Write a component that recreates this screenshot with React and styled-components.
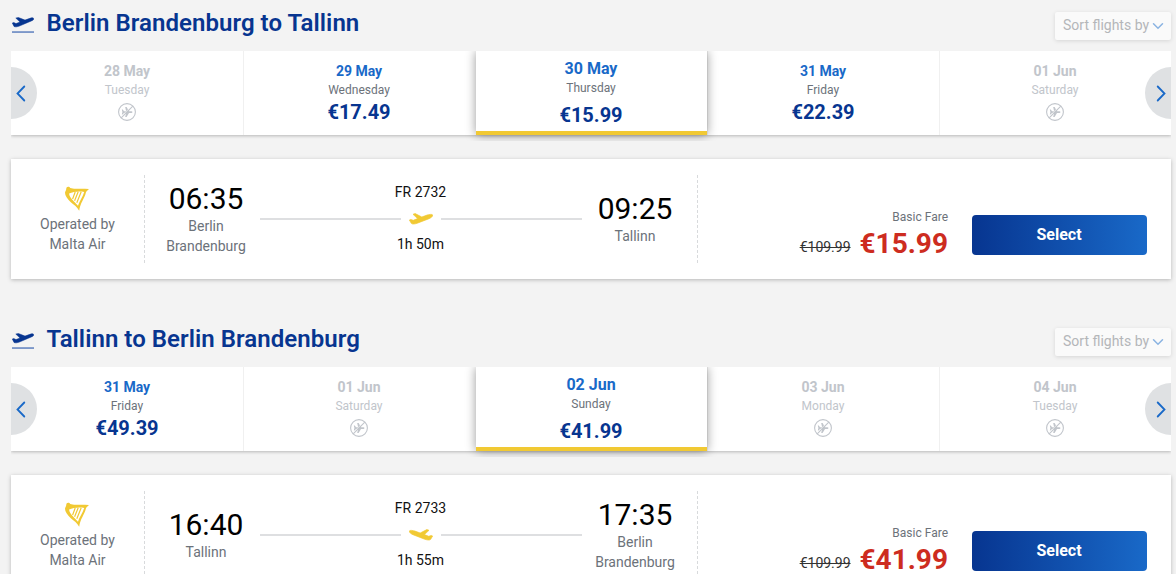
import React from 'react'
import styled, { createGlobalStyle, css } from 'styled-components'

const trips = [
    {
        title: 'Berlin Brandenburg to Tallinn',
        days: [
            { date: '28 May', day: 'Tuesday' },
            { date: '29 May', day: 'Wednesday', price: '€17.49' },
            { date: '30 May', day: 'Thursday', price: '€15.99', selected: true },
            { date: '31 May', day: 'Friday', price: '€22.39' },
            { date: '01 Jun', day: 'Saturday' },
        ],
        flight: {
            number: 'FR 2732',
            duration: '1h 50m',
            from: { time: '06:35', city: 'Berlin Brandenburg' },
            to: { time: '09:25', city: 'Tallinn' },
            oldPrice: '€109.99',
            price: '€15.99',
        },
    },
    {
        title: 'Tallinn to Berlin Brandenburg',
        days: [
            { date: '31 May', day: 'Friday', price: '€49.39' },
            { date: '01 Jun', day: 'Saturday' },
            { date: '02 Jun', day: 'Sunday', price: '€41.99', selected: true },
            { date: '03 Jun', day: 'Monday' },
            { date: '04 Jun', day: 'Tuesday' },
        ],
        flight: {
            number: 'FR 2733',
            duration: '1h 55m',
            from: { time: '16:40', city: 'Tallinn' },
            to: { time: '17:35', city: 'Berlin Brandenburg' },
            oldPrice: '€109.99',
            price: '€41.99',
            inbound: true,
        },
    },
]

const TakeoffIcon = () => (
    <svg width="22" height="17" viewBox="0 0 22 17">
        <path fill="#073590" stroke="#073590" strokeWidth=".5" strokeLinejoin="round" d="M.3 6L1.8 5.5L4 6.6L8 5L3.8 1.1L6.4.5L13 3.1L18.6 1.1C20.3.5 21.4.7 21.7 1.4C22 2.4 21 3.3 19.4 3.9L8 8.8C5.5 9.8 3 10.3 2 9.4Z" />
        <path fill="#6f8dc4" d="M0 14.2h22v1.7H0z" />
    </svg>
)

const PlaneIcon = ({ inbound }) => (
    <svg width="24" height="12" viewBox="0 0 24 12">
        <path
            transform={inbound ? 'translate(24 0) scale(-1 1)' : undefined}
            fill="#f1c933"
            stroke="#f1c933"
            strokeWidth=".7"
            strokeLinejoin="round"
            d="M23.6 1.9C22.8 1 20 1.4 18 2.1L12.8 4L6.2.6L4 1.3L8.6 5.6L4.3 7.3L1.8 6.5L.4 7L2.3 10.3C3.1 11.5 6 11 8.3 10.2L20 5.7C22.2 4.8 24.2 3.1 23.6 1.9Z"
        />
    </svg>
)

const HarpIcon = () => (
    <svg width="24" height="25" viewBox="0 0 24 25">
        <path fill="#f1c933" fillRule="evenodd" d="M1.4 1.7C2.3.4 4.6.5 5.2 2C9.4 3.6 14 2 23.8 3C22.9 4.4 21.8 4.7 20.9 6.4C19.6 12.4 15.2 16.8 14.2 24.7C12.1 20.9 9.2 19.2 5.8 16.3C2.3 13.2 0 9.4 0 6.8C.1 5.2 1.4 4.3 1.4 1.7ZM4.1 7.6C4.4 12 9.6 15.9 13 19.8C14 15.6 17.8 11.1 19.2 5.9C13.6 4.8 8 5.9 4.1 7.6Z" />
        <path fill="none" stroke="#f1c933" strokeWidth="1.2" d="M10.2 6L7.6 13M13.2 5.8L9.6 14.8M16.2 5.8L11.8 16.8" />
    </svg>
)

const NoFlightIcon = () => (
    <svg width="18" height="18" viewBox="0 0 18 18">
        <circle cx="9" cy="9" r="8.4" fill="none" stroke="#c1c5cb" strokeWidth="1.1" />
        <path fill="#c1c5cb" d="M3.8 6.6H4.8L6 8.2H8.1L7.2 4H8.6L11 8.2H13.4C14.8 8.4 14.8 9.7 13.4 9.9H11L8.6 14H7.2L8.1 9.9H6L4.8 11.5H3.8L4.4 9Z" />
        <path stroke="#fff" strokeWidth=".8" d="M3.9 12.9L12.9 3.9" />
        <path stroke="#c1c5cb" strokeWidth="1.1" d="M3.2 14.8L14.8 3.2" />
    </svg>
)

const Chevron = ({ d, width, height, color, stroke }) => (
    <svg width={width} height={height} viewBox={`0 0 ${width} ${height}`}>
        <path d={d} fill="none" stroke={color} strokeWidth={stroke} strokeLinecap="round" />
    </svg>
)

const DayTab = ({ item }) => (
    <Day $selected={item.selected} $disabled={!item.price}>
        <DayDate>{item.date}</DayDate>
        <DayName>{item.day}</DayName>
        {item.price ? <DayPrice>{item.price}</DayPrice> : <NoFlightIcon />}
    </Day>
)

const FlightCard = ({ flight }) => (
    <Card>
        <Operator>
            <HarpIcon />
            <span>Operated by<br />Malta Air</span>
        </Operator>
        <Schedule>
            <Stop>
                <Time>{flight.from.time}</Time>
                <City>{flight.from.city}</City>
            </Stop>
            <Route>
                <span>{flight.number}</span>
                <RouteLine>
                    <PlaneIcon inbound={flight.inbound} />
                </RouteLine>
                <span>{flight.duration}</span>
            </Route>
            <Stop>
                <Time>{flight.to.time}</Time>
                <City>{flight.to.city}</City>
            </Stop>
        </Schedule>
        <Fare>
            <FareName>Basic Fare</FareName>
            <Prices>
                <OldPrice>{flight.oldPrice}</OldPrice>
                <Price>{flight.price}</Price>
            </Prices>
        </Fare>
        <SelectButton>Select</SelectButton>
    </Card>
)

const App = () => (
    <>
        <GlobalStyle />
        <Page>
            {trips.map((trip) => (
                <Trip key={trip.title}>
                    <TripHeader>
                        <TakeoffIcon />
                        <Title>{trip.title}</Title>
                        <SortButton>
                            Sort flights by
                            <Chevron width={12} height={8} d="M1.5 1.7L6 6.2L10.5 1.7" color="#8ab3e2" stroke={1.5} />
                        </SortButton>
                    </TripHeader>
                    <Carousel>
                        {trip.days.map((item) => <DayTab key={item.date} item={item} />)}
                        <Arrow $side="left">
                            <Chevron width={10} height={17} d="M8.3 1.5L1.5 8.5L8.3 15.5" color="#1969c8" stroke={1.8} />
                        </Arrow>
                        <Arrow $side="right">
                            <Chevron width={10} height={17} d="M1.7 1.5L8.5 8.5L1.7 15.5" color="#1969c8" stroke={1.8} />
                        </Arrow>
                    </Carousel>
                    <FlightCard flight={trip.flight} />
                </Trip>
            ))}
        </Page>
    </>
)

export default App

const GlobalStyle = createGlobalStyle`
    * {
        box-sizing: border-box;
    }

    body {
        margin: 0;
        background: #f3f3f3;
        font-family: Roboto, "Liberation Sans", sans-serif;
        overflow: hidden;
    }

    svg {
        display: block;
        flex-shrink: 0;
    }
`

const Page = styled.main`
    width: 1176px;
    height: 574px;
    overflow: hidden;
    padding: 0 5px 0 11px;
`

const Trip = styled.section`
    height: 316px;
`

const TripHeader = styled.header`
    display: flex;
    align-items: center;
    height: 51px;
    padding-left: 1px;
`

const Title = styled.h2`
    flex: 1;
    margin: 0 0 5px 12.5px;
    font-size: 24px;
    line-height: 32px;
    font-weight: 600;
    letter-spacing: 0.05px;
    color: #073590;
`

const SortButton = styled.button`
    display: flex;
    align-items: center;
    justify-content: space-between;
    width: 116px;
    height: 28px;
    padding: 0 7px 2px 8px;
    border: 0;
    border-radius: 2px;
    background: #fafafa;
    box-shadow: 0 1px 4px rgba(0, 0, 0, 0.12);
    font: 400 14px/20px Roboto, sans-serif;
    color: #b4b6b9;
    white-space: nowrap;

    svg {
        margin-top: 2px;
    }
`

const Carousel = styled.div`
    position: relative;
    display: flex;
    height: 84px;
    background: #fff;
    box-shadow: 0 1px 3px rgba(0, 0, 0, 0.25);
    clip-path: inset(0 0 -6px 0);
`

const DayDate = styled.div`
    font-size: 14px;
    line-height: 20px;
    font-weight: 700;
    color: #1969c8;
`

const DayName = styled.div`
    margin-top: 1px;
    font-size: 12px;
    line-height: 16px;
    color: #6c727a;
`

const DayPrice = styled.div`
    margin-top: 2px;
    font-size: 20px;
    line-height: 24px;
    font-weight: 700;
    color: #073590;
`

const Day = styled.div`
    display: flex;
    flex-direction: column;
    align-items: center;
    width: 232px;
    padding-top: 10px;

    div + & {
        padding-right: 1px;
        border-left: 1px solid #f0f0f0;
    }

    svg {
        margin-top: 5px;
    }

    ${({ $disabled }) => $disabled && css`
        ${DayDate}, ${DayName} {
            color: #c1c5cb;
        }
    `}

    ${({ $selected }) => $selected && css`
        position: relative;
        width: 231px;
        margin-left: 1px;
        padding: 8px 1px 0 0;
        border-bottom: 4px solid #f1c933;
        background: #fff;
        box-shadow: 0 0 10px rgba(0, 0, 0, 0.4);

        div + & {
            border-left: 0;
        }

        ${DayDate} {
            font-size: 16px;
        }

        ${DayName} {
            margin-top: 1px;
        }

        ${DayPrice} {
            margin-top: 7px;
        }
    `}
`

const Arrow = styled.button`
    position: absolute;
    top: 16px;
    ${({ $side }) => $side}: 0;
    display: flex;
    align-items: center;
    justify-content: ${({ $side }) => $side === 'left' ? 'flex-start' : 'flex-end'};
    width: 26px;
    height: 52px;
    padding: 0 5px;
    border: 0;
    border-radius: ${({ $side }) => $side === 'left' ? '0 26px 26px 0' : '26px 0 0 26px'};
    background: #dfe1e3;
`

const Card = styled.article`
    display: flex;
    align-items: center;
    height: 120px;
    margin-top: 24px;
    padding-right: 24px;
    background: #fff;
    box-shadow: 0 1px 4px rgba(0, 0, 0, 0.25);
`

const Operator = styled.div`
    display: flex;
    flex-direction: column;
    align-items: center;
    width: 134px;
    height: 88px;
    padding: 11px 2px 0 0;
    border-right: 1px dashed #d8dadc;
    font-size: 14px;
    line-height: 20px;
    text-align: center;
    color: #6c727a;

    span {
        margin: 3px 0 0 2px;
    }
`

const Schedule = styled.div`
    display: flex;
    align-items: center;
    width: 553px;
    height: 88px;
    padding: 0 8px 2px;
    border-right: 1px dashed #d8dadc;
`

const Stop = styled.div`
    width: 107px;
    padding-right: 1px;
    text-align: center;
`

const Time = styled.div`
    padding-top: 1px;
    font-size: 30px;
    line-height: 35px;
    color: #000;
`

const City = styled.div`
    padding: 0 10px;
    font-size: 14px;
    line-height: 20px;
    color: #6c727a;
`

const Route = styled.div`
    display: flex;
    flex-direction: column;
    align-items: center;
    width: 322px;
    font-size: 14px;
    line-height: 20px;
    color: #111;

    span {
        margin-right: 1px;
    }
`

const RouteLine = styled.div`
    display: flex;
    align-items: center;
    gap: 8px;
    width: 100%;
    height: 32px;
    padding-top: 1px;

    &::before, &::after {
        content: '';
        flex: 1;
        height: 2px;
        background: #dedfe1;
    }
`

const Fare = styled.div`
    flex: 1;
    padding-top: 36px;
    text-align: right;
`

const FareName = styled.div`
    font-size: 12px;
    line-height: 16px;
    color: #6c727a;
`

const Prices = styled.div`
    display: flex;
    align-items: baseline;
    justify-content: flex-end;
    gap: 9px;
    padding-top: 1px;
    line-height: 35px;
`

const OldPrice = styled.span`
    font-size: 14px;
    color: #333;
    text-decoration: line-through;
    transform: translateY(-1px);
`

const Price = styled.span`
    font-size: 28px;
    font-weight: 700;
    color: #cd2c20;
`

const SelectButton = styled.button`
    width: 175px;
    height: 40px;
    margin: 32px 0 0 24px;
    padding: 0 7px 0 6px;
    border: 0;
    border-radius: 4px;
    background: linear-gradient(90deg, #073590, #1969c8);
    font: 700 16px/24px Roboto, sans-serif;
    color: #fff;
`
